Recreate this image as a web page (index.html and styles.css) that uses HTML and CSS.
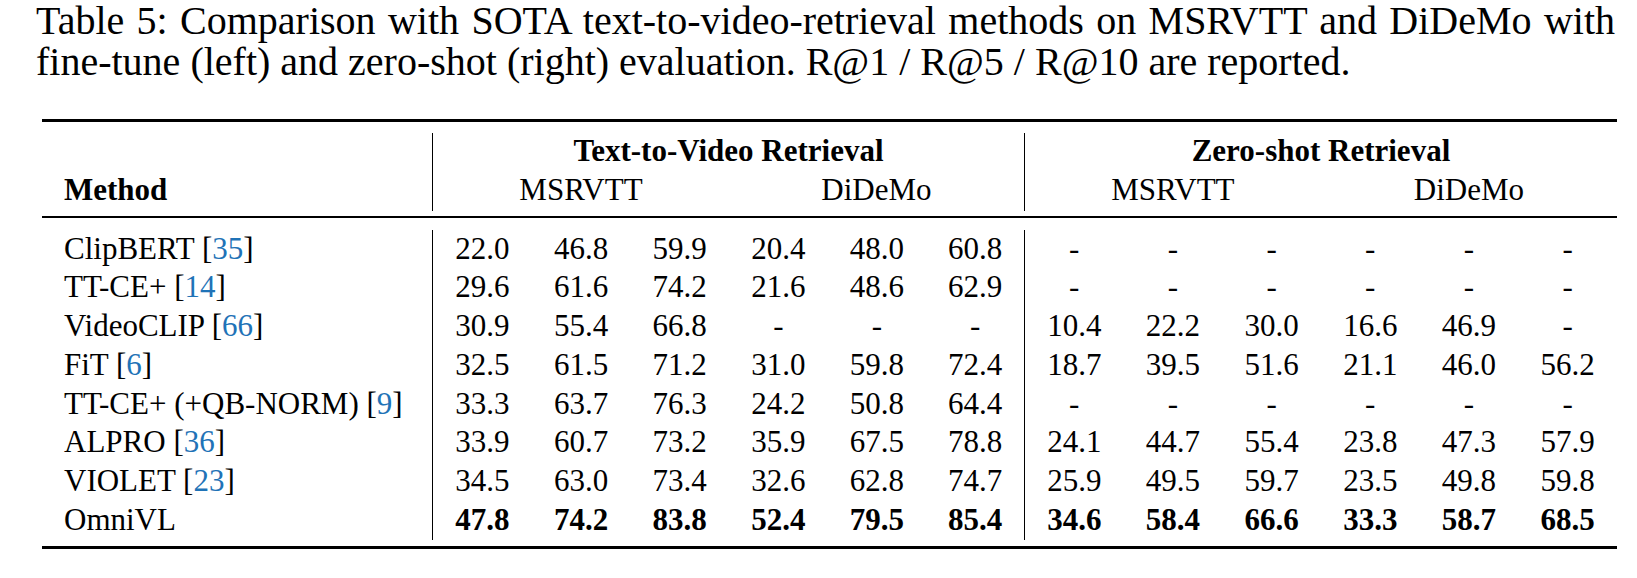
FILE: index.html
```html
<!DOCTYPE html>
<html lang="en">
<head>
    <meta charset="UTF-8">
    <title>Table 5 - Text-to-Video Retrieval</title>
    <link rel="stylesheet" href="styles.css">
</head>
<body>
    <div class="caption">
        <div class="line first">Table 5: Comparison with SOTA text-to-video-retrieval methods on MSRVTT and DiDeMo with</div>
        <div class="line">fine-tune (left) and zero-shot (right) evaluation. R@1 / R@5 / R@10 are reported.</div>
    </div>
    <table class="results">
        <colgroup>
            <col class="col-method">
            <col span="12" class="col-num">
        </colgroup>
        <thead>
            <tr class="rule top"><td colspan="13"></td></tr>
            <tr>
                <th class="name sep"></th>
                <th colspan="6" class="group sep">Text-to-Video Retrieval</th>
                <th colspan="6" class="group">Zero-shot Retrieval</th>
            </tr>
            <tr>
                <th class="name sep head">Method</th>
                <th colspan="3">MSRVTT</th>
                <th colspan="3" class="sep">DiDeMo</th>
                <th colspan="3">MSRVTT</th>
                <th colspan="3">DiDeMo</th>
            </tr>
            <tr class="rule mid"><td colspan="13"></td></tr>
        </thead>
        <tbody>
            <tr>
                <td class="name sep">ClipBERT [<span class="cite">35</span>]</td>
                <td>22.0</td><td>46.8</td><td>59.9</td><td>20.4</td><td>48.0</td><td class="sep">60.8</td>
                <td>-</td><td>-</td><td>-</td><td>-</td><td>-</td><td>-</td>
            </tr>
            <tr>
                <td class="name sep">TT-CE+ [<span class="cite">14</span>]</td>
                <td>29.6</td><td>61.6</td><td>74.2</td><td>21.6</td><td>48.6</td><td class="sep">62.9</td>
                <td>-</td><td>-</td><td>-</td><td>-</td><td>-</td><td>-</td>
            </tr>
            <tr>
                <td class="name sep">VideoCLIP [<span class="cite">66</span>]</td>
                <td>30.9</td><td>55.4</td><td>66.8</td><td>-</td><td>-</td><td class="sep">-</td>
                <td>10.4</td><td>22.2</td><td>30.0</td><td>16.6</td><td>46.9</td><td>-</td>
            </tr>
            <tr>
                <td class="name sep">FiT [<span class="cite">6</span>]</td>
                <td>32.5</td><td>61.5</td><td>71.2</td><td>31.0</td><td>59.8</td><td class="sep">72.4</td>
                <td>18.7</td><td>39.5</td><td>51.6</td><td>21.1</td><td>46.0</td><td>56.2</td>
            </tr>
            <tr>
                <td class="name sep">TT-CE+ (+QB-NORM) [<span class="cite">9</span>]</td>
                <td>33.3</td><td>63.7</td><td>76.3</td><td>24.2</td><td>50.8</td><td class="sep">64.4</td>
                <td>-</td><td>-</td><td>-</td><td>-</td><td>-</td><td>-</td>
            </tr>
            <tr>
                <td class="name sep">ALPRO [<span class="cite">36</span>]</td>
                <td>33.9</td><td>60.7</td><td>73.2</td><td>35.9</td><td>67.5</td><td class="sep">78.8</td>
                <td>24.1</td><td>44.7</td><td>55.4</td><td>23.8</td><td>47.3</td><td>57.9</td>
            </tr>
            <tr>
                <td class="name sep">VIOLET [<span class="cite">23</span>]</td>
                <td>34.5</td><td>63.0</td><td>73.4</td><td>32.6</td><td>62.8</td><td class="sep">74.7</td>
                <td>25.9</td><td>49.5</td><td>59.7</td><td>23.5</td><td>49.8</td><td>59.8</td>
            </tr>
            <tr class="best">
                <td class="name sep">OmniVL</td>
                <td>47.8</td><td>74.2</td><td>83.8</td><td>52.4</td><td>79.5</td><td class="sep">85.4</td>
                <td>34.6</td><td>58.4</td><td>66.6</td><td>33.3</td><td>58.7</td><td>68.5</td>
            </tr>
            <tr class="rule bottom"><td colspan="13"></td></tr>
        </tbody>
    </table>
</body>
</html>
```

FILE: styles.css
```css
body { margin: 0; background: #fff; color: #000; font-family: "Liberation Serif", "Times New Roman", serif; }

/* caption: first line is justified across the full width */
.caption { padding: 0 22px 0 36px; font-size: 40px; line-height: 41px; }
.caption .line { height: 41px; white-space: nowrap; }
.caption .first { text-align: justify; text-align-last: justify; white-space: normal; }

.results { margin: 37px 0 0 42px; width: 1575px; table-layout: fixed; border-collapse: separate; border-spacing: 0; font-size: 31px; line-height: 38.75px; }
.col-method { width: 391px; }
.col-num { width: 98.67px; }
.results th, .results td { padding: 0; height: 38.75px; text-align: center; font-weight: normal; white-space: nowrap; }
.results thead th { height: 36px; line-height: 36px; padding-bottom: 2.75px; }
.results .name { text-align: left; padding-left: 22px; }
.results .head { font-weight: bold; }
.results .group { font-weight: bold; }
.results .sep { border-right: 1px solid #000; }
.results .best td { font-weight: bold; }
.results .best .name { font-weight: normal; }
.cite { color: #1f73b7; }

/* booktabs style rules, vertical lines stop short of them */
.results .rule td { height: auto; padding: 0; line-height: 0; }
.results .rule td::before { content: ""; display: block; border-top: 2px solid #000; }
.results .rule.top td { padding-bottom: 11px; }
.results .rule.top td::before { border-top-width: 3px; }
.results .rule.mid td { padding: 5px 0 12px; }
.results .rule.bottom td { padding-top: 6px; }
.results .rule.bottom td::before { border-top-width: 3px; }
```
